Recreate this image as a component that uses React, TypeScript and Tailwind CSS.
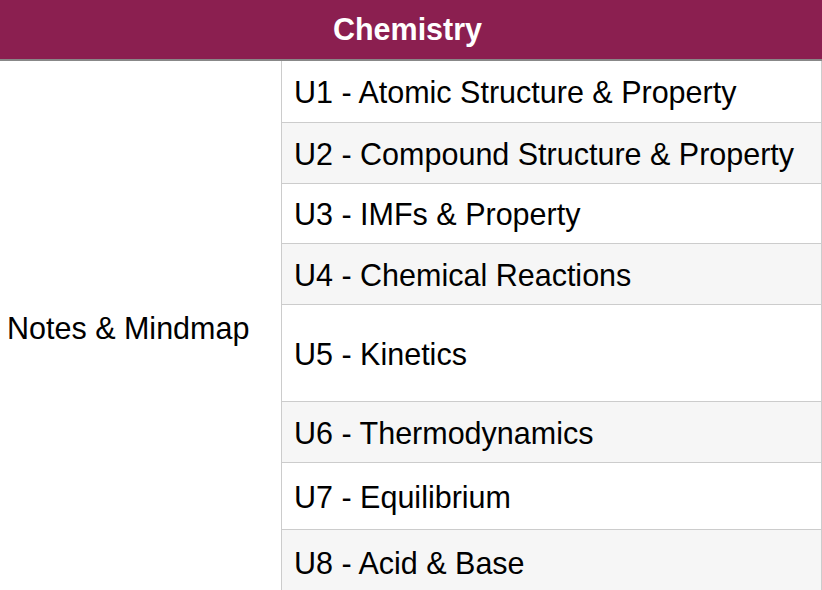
import React from "react";

const units = [
  { name: "U1 - Atomic Structure & Property", h: "h-[62px]", bg: "bg-white" },
  { name: "U2 - Compound Structure & Property", h: "h-[61px]", bg: "bg-[#f6f6f6]" },
  { name: "U3 - IMFs & Property", h: "h-[60px]", bg: "bg-white" },
  { name: "U4 - Chemical Reactions", h: "h-[61px]", bg: "bg-[#f6f6f6]" },
  { name: "U5 - Kinetics", h: "h-[97px]", bg: "bg-white" },
  { name: "U6 - Thermodynamics", h: "h-[61px]", bg: "bg-[#f6f6f6]" },
  { name: "U7 - Equilibrium", h: "h-[67px]", bg: "bg-white" },
  { name: "U8 - Acid & Base", h: "h-[65px]", bg: "bg-[#f6f6f6]" },
];

function App() {
  return (
    <div className="w-[822px] bg-white text-black font-['Liberation_Sans',Arial,sans-serif] text-[30.5px] leading-none">
      <div className="h-[61px] bg-[#8b1f50] border-b-2 border-[#888888] flex items-center justify-center pr-[7px]">
        <h1 className="font-bold text-white">Chemistry</h1>
      </div>
      <div className="flex border-r border-[#cccccc]">
        <div className="w-[282px] border-r border-[#cccccc] flex items-center pl-[7px]">
          Notes &amp; Mindmap
        </div>
        <div className="flex-1 flex flex-col">
          {units.map((u) => (
            <div
              key={u.name}
              className={`${u.h} ${u.bg} border-b border-[#cccccc] flex items-center pl-[12px] pt-[2px] whitespace-nowrap`}
            >
              {u.name}
            </div>
          ))}
        </div>
      </div>
    </div>
  );
}

export default App;
